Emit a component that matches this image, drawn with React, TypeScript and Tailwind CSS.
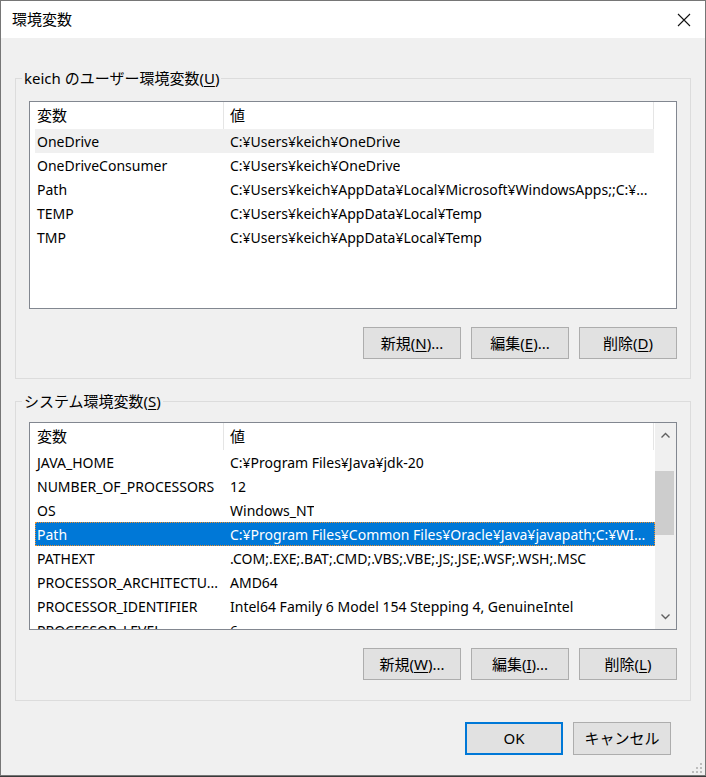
import React from "react";

const font = "font-['Noto_Sans','Noto_Sans_CJK_JP',sans-serif]";

const userVars = [
  ["OneDrive", "C:¥Users¥keich¥OneDrive"],
  ["OneDriveConsumer", "C:¥Users¥keich¥OneDrive"],
  ["Path", "C:¥Users¥keich¥AppData¥Local¥Microsoft¥WindowsApps;;C:¥..."],
  ["TEMP", "C:¥Users¥keich¥AppData¥Local¥Temp"],
  ["TMP", "C:¥Users¥keich¥AppData¥Local¥Temp"],
];

const systemVars = [
  ["JAVA_HOME", "C:¥Program Files¥Java¥jdk-20"],
  ["NUMBER_OF_PROCESSORS", "12"],
  ["OS", "Windows_NT"],
  ["Path", "C:¥Program Files¥Common Files¥Oracle¥Java¥javapath;C:¥WI..."],
  ["PATHEXT", ".COM;.EXE;.BAT;.CMD;.VBS;.VBE;.JS;.JSE;.WSF;.WSH;.MSC"],
  ["PROCESSOR_ARCHITECTU...", "AMD64"],
  ["PROCESSOR_IDENTIFIER", "Intel64 Family 6 Model 154 Stepping 4, GenuineIntel"],
  ["PROCESSOR_LEVEL", "6"],
];

const Button = ({ label, k, tail = "" }: { label: string; k: string; tail?: string }) => (
  <button className="h-[32px] w-[98px] border border-[#adadad] bg-[#e1e1e1] text-[15px] text-black flex items-center justify-center">
    {label}(<span className="underline underline-offset-2">{k}</span>){tail}
  </button>
);

const Header = () => (
  <div className="flex h-[27px] items-center bg-white text-[15px] text-black">
    <div className="w-[194px] h-full pl-[7px] flex items-center border-r border-[#e5e5e5]">変数</div>
    <div className="w-[430px] h-full pl-[6px] flex items-center border-r border-[#e5e5e5]">値</div>
  </div>
);

const Row = ({ name, value, state }: { name: string; value: string; state?: "hover" | "selected" }) => (
  <div
    className={
      "ml-[5px] flex h-[24px] items-center whitespace-nowrap text-[14px] " +
      (state === "selected"
        ? "w-[620px] bg-[#0078d7] text-white outline outline-1 outline-dotted outline-[#f0902a] -outline-offset-1"
        : state === "hover"
        ? "w-[619px] bg-[#f0f0f0] text-black"
        : "w-[619px] text-black")
    }
  >
    <div className="w-[188px] shrink-0 pl-[2px] overflow-hidden">{name}</div>
    <div className="pl-[7px] overflow-hidden">{value}</div>
  </div>
);

const Chevron = ({ up }: { up?: boolean }) => (
  <svg width="9" height="6" viewBox="0 0 9 6">
    <path d={up ? "M0.5 5.5 L4.5 1.5 L8.5 5.5" : "M0.5 0.5 L4.5 4.5 L8.5 0.5"} fill="none" stroke="#606060" strokeWidth="1.4" />
  </svg>
);

export default function App() {
  return (
    <div className={`w-[706px] h-[777px] bg-[#3a3a3a] ${font}`}>
      <div className="relative w-[706px] h-[776px] border border-[#767676] bg-[#f0f0f0] flex flex-col">
        {/* title bar */}
        <div className="h-[37px] bg-white flex items-center justify-between pl-[11px] pr-[14px] text-[15px] text-black">
          <span>環境変数</span>
          <svg width="14" height="14" viewBox="0 0 14 14">
            <path d="M1 1 L13 13 M13 1 L1 13" stroke="#111" strokeWidth="1.1" />
          </svg>
        </div>

        <div className="px-[14px] flex flex-col">
          <fieldset className="mt-[30px] border border-[#dcdcdc] pl-[6px] pr-[13px] pt-[13px] pb-[19px]">
            <legend className="px-[2px] h-[20px] leading-[20px] text-[15px] text-black">
              keich のユーザー環境変数(<span className="underline underline-offset-2">U</span>)
            </legend>
            <div className="pl-[7px]">
              <div className="h-[208px] border border-[#828790] bg-white overflow-hidden">
                <Header />
                {userVars.map(([n, v], i) => (
                  <Row key={n + i} name={n} value={v} state={i === 0 ? "hover" : undefined} />
                ))}
              </div>
              <div className="mt-[18px] flex justify-end gap-[10px]">
                <Button label="新規" k="N" tail="..." />
                <Button label="編集" k="E" tail="..." />
                <Button label="削除" k="D" />
              </div>
            </div>
          </fieldset>

          <fieldset className="mt-[12px] border border-[#dcdcdc] pl-[6px] pr-[13px] pt-[11px] pb-[20px]">
            <legend className="px-[2px] h-[20px] leading-[20px] text-[15px] text-black">
              システム環境変数(<span className="underline underline-offset-2">S</span>)
            </legend>
            <div className="pl-[7px]">
              <div className="h-[208px] border border-[#828790] bg-white overflow-hidden flex">
                <div className="w-[625px] overflow-hidden">
                  <Header />
                  {systemVars.map(([n, v], i) => (
                    <Row key={n + i} name={n} value={v} state={i === 3 ? "selected" : undefined} />
                  ))}
                </div>
                <div className="w-[21px] bg-[#f0f0f0] flex flex-col">
                  <div className="h-[24px] flex items-center justify-center">
                    <Chevron up />
                  </div>
                  <div className="mt-[24px] h-[64px] w-[19px] bg-[#cdcdcd]" />
                  <div className="mt-auto h-[24px] flex items-center justify-center">
                    <Chevron />
                  </div>
                </div>
              </div>
              <div className="mt-[18px] flex justify-end gap-[10px]">
                <Button label="新規" k="W" tail="..." />
                <Button label="編集" k="I" tail="..." />
                <Button label="削除" k="L" />
              </div>
            </div>
          </fieldset>

          <div className="mt-[21px] flex justify-end gap-[10px] pr-[20px]">
            <button className="h-[33px] w-[98px] border-2 border-[#0078d7] bg-[#e1e1e1] text-[15px] text-black">OK</button>
            <button className="h-[33px] w-[98px] border border-[#adadad] bg-[#e1e1e1] text-[15px] text-black">キャンセル</button>
          </div>
        </div>

        {/* size grip */}
        <svg className="absolute right-[3px] bottom-[2px]" width="10" height="10" viewBox="0 0 10 10">
          {[
            [8, 0], [8, 4], [4, 4], [8, 8], [4, 8], [0, 8],
          ].map(([x, y], i) => (
            <rect key={i} x={x} y={y} width="2" height="2" fill="#bdbdbd" />
          ))}
        </svg>
      </div>
    </div>
  );
}
